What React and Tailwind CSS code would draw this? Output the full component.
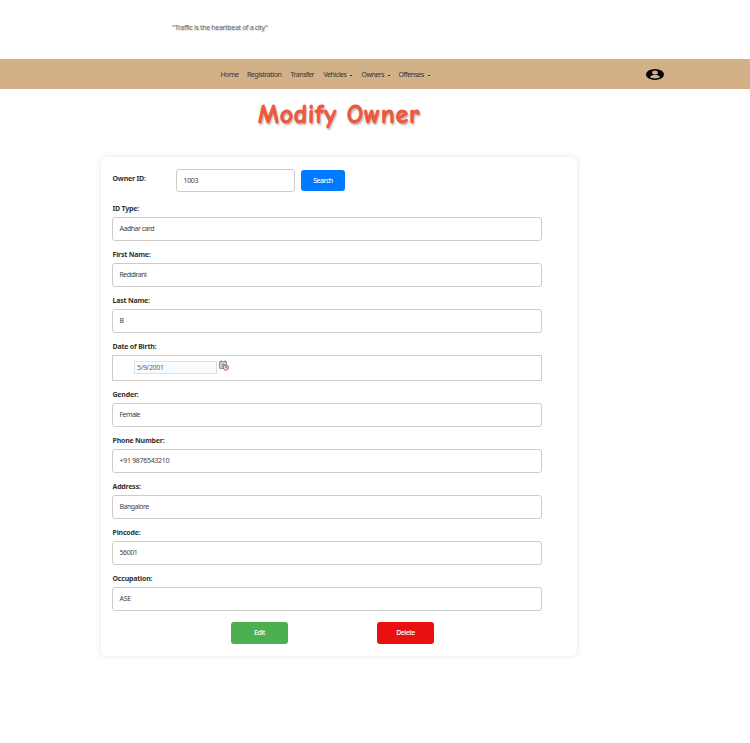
import React from 'react';

const navItems = [
  { label: 'Home', width: 'w-[26.5px]' },
  { label: 'Registration', width: 'w-[43.5px]' },
  { label: 'Transfer', width: 'w-[33px]' },
  { label: 'Vehicles', width: 'w-[38px]', menu: true },
  { label: 'Owners', width: 'w-[37px]', menu: true },
  { label: 'Offenses', width: 'w-[40px]', menu: true },
];

function Label({ children }) {
  return (
    <label className="block h-[10px] whitespace-nowrap pl-[0.5px] text-[7px] font-bold leading-[10px] tracking-[-0.2px] text-[#333]">
      {children}
    </label>
  );
}

function Field({ label, value, tracking = 'tracking-[-0.45px]' }) {
  return (
    <div className="mb-3 h-[34px]">
      <Label>{label}</Label>
      <div className={`mt-[3px] flex h-6 w-[430px] items-center rounded-[3px] border border-[#ccc] px-[6.5px] text-[7px] leading-[10px] text-[#444] ${tracking}`}>
        {value}
      </div>
    </div>
  );
}

function CalendarIcon() {
  return (
    <svg className="ml-[2px] mt-[4px] h-[11px] w-[10px]" viewBox="0 0 10 11" fill="none">
      <path d="M.7 1.7h6.6v6.6H.7z" fill="#eee" stroke="#737078" strokeWidth=".9" />
      <path d="M2.2.3v2.3M5.8.3v2.3M1.7 4.3h4.6M1.7 6.2h3M4.1 3.2v4" stroke="#77737d" strokeWidth=".7" />
      <circle cx="6.9" cy="7.6" r="2.6" fill="#f8e9df" stroke="#a7553f" strokeWidth=".9" />
      <path d="M6.9 6v1.8h1.5" stroke="#333" strokeWidth=".7" />
    </svg>
  );
}

function UserIcon() {
  return (
    <svg className="ml-auto mr-[86px] h-3 w-[18px]" viewBox="0 0 18 12">
      <ellipse cx="9" cy="6.4" rx="9" ry="5.5" fill="#000" />
      <ellipse cx="9" cy="4.4" rx="2.9" ry="2" fill="#d3b188" />
      <path d="M4 9C4.7 7.6 6.6 7.1 9 7.1s4.3.5 5 1.9c-1.2 1-3 1.4-5 1.4S5.2 10 4 9z" fill="#d3b188" />
    </svg>
  );
}

export default function App() {
  return (
    <div className="h-[743px] w-[750px] overflow-hidden bg-white font-['Noto_Sans','Open_Sans',sans-serif]">
      <header className="h-[59px] pl-[172px] pt-[23px]">
        <p className="whitespace-nowrap text-[7px] leading-[10px] tracking-[-0.33px] text-[#666] [text-shadow:1px_1px_1px_#ccc]">
          "Traffic is the heartbeat of a city"
        </p>
      </header>

      <nav className="flex h-[30px] items-center bg-[#d3b188] pl-[220.4px] text-[7px] leading-[10px] tracking-[-0.45px] text-[#333]">
        {navItems.map((item) => (
          <div key={item.label} className={`flex shrink-0 items-center whitespace-nowrap pt-[2px] ${item.width}`}>
            {item.label}
            {item.menu && <span className="ml-[3.5px] h-px w-[2px] bg-[#333]" />}
          </div>
        ))}
        <UserIcon />
      </nav>

      <h1 className="h-[68px] whitespace-nowrap pl-[258px] pt-[9px] font-['Comic_Sans_MS','Comic_Neue',cursive] text-[26px] font-bold leading-[34px] tracking-[0.7px] text-[#ec5840] [-webkit-text-stroke:0.8px_#ec5840] [text-shadow:1px_2px_2px_#aaa]">
        Modify Owner
      </h1>

      <main className="ml-[101px] h-[499px] w-[476px] rounded-[6px] bg-white pl-[11px] pt-[11px] shadow-[0_0_6px_rgba(0,0,0,0.1)]">
        <div className="mb-3 flex h-6 items-center">
          <div className="w-16 pb-[2px]">
            <Label>Owner ID:</Label>
          </div>
          <div className="flex h-[23px] w-[119px] items-center rounded-[3px] border border-[#ccc] px-[6.5px] pt-[2px] text-[7px] leading-[10px] tracking-[-0.35px] text-[#444]">
            1003
          </div>
          <button className="ml-[6px] h-[21px] w-11 rounded-[3px] bg-[#007bff] pt-[2px] text-[7px] font-medium leading-[10px] tracking-[-0.5px] text-white">
            Search
          </button>
        </div>

        <Field label="ID Type:" value="Aadhar card" tracking="tracking-[-0.5px]" />
        <Field label="First Name:" value="Reddirani" tracking="tracking-[-0.53px]" />
        <Field label="Last Name:" value="B" />

        <div className="mb-3 h-9">
          <Label>Date of Birth:</Label>
          <div className="mt-[3px] flex h-[26px] w-[430px] border border-[#ccc] pl-[21px]">
            <div className="mt-[5px] flex h-[13px] w-[83px] items-center border border-[#dce3e8] bg-[#f8fcff] pl-[2px] text-[7px] leading-[10px] tracking-[-0.33px] text-[#666]">
              5/9/2001
            </div>
            <CalendarIcon />
          </div>
        </div>

        <Field label="Gender:" value="Female" tracking="tracking-[-0.55px]" />
        <Field label="Phone Number:" value="+91 9876543210" tracking="tracking-[-0.3px]" />
        <Field label="Address:" value="Bangalore" tracking="tracking-[-0.5px]" />
        <Field label="Pincode:" value="56001" tracking="tracking-[-0.42px]" />
        <Field label="Occupation:" value="ASE" tracking="tracking-[-0.3px]" />

        <div className="flex gap-[89px] pl-[119px] pt-[2px]">
          <button className="h-[22px] w-[57px] rounded-[3px] bg-[#4caf50] text-[7px] font-medium leading-[10px] tracking-[-0.5px] text-white">
            Edit
          </button>
          <button className="h-[22px] w-[57px] rounded-[3px] bg-[#e81010] text-[7px] font-medium leading-[10px] tracking-[-0.5px] text-white">
            Delete
          </button>
        </div>
      </main>
    </div>
  );
}
